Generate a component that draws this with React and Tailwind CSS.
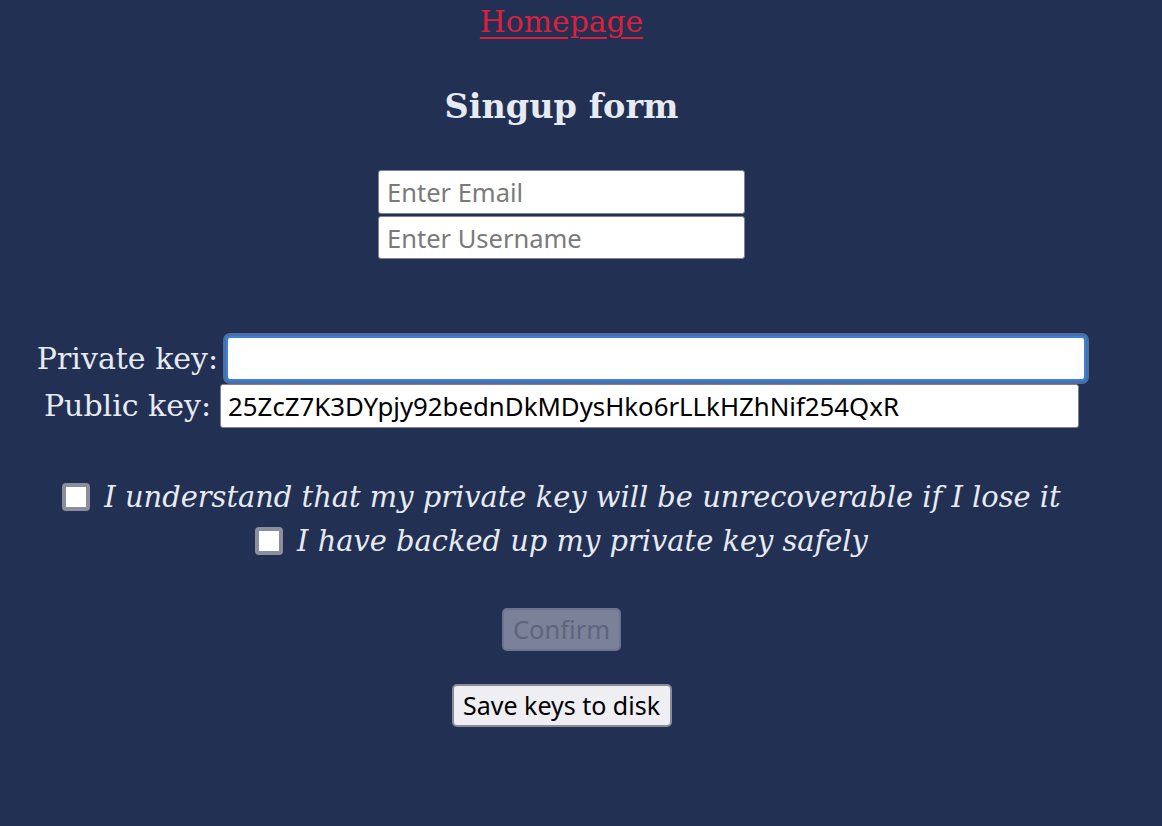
import React from "react";

const serif = "font-['DejaVu_Serif','Liberation_Serif',serif]";
const sans = "font-['Noto_Sans','Open_Sans',sans-serif]";

export default function App() {
  return (
    <div className="min-h-[826px] w-full bg-[#223153] text-[#e7eaf1] flex flex-col items-center pr-[39px]">
      {/* top link */}
      <a
        href="#"
        className={`${serif} text-[29.8px] leading-[44px] text-[#dc1f3d] underline underline-offset-[5px] decoration-[2px]`}
      >
        Homepage
      </a>

      <h1 className={`${serif} mt-[41px] text-[33.5px] leading-[44px] font-bold`}>Singup form</h1>

      {/* account fields */}
      <div className={`${sans} mt-[41px] flex flex-col gap-[2px]`}>
        <input
          type="email"
          placeholder="Enter Email"
          className="w-[367px] h-[44px] bg-white border border-[#80828f] rounded-[3px] px-[8px] text-[25.5px] text-black placeholder:text-[#7a7a7a] outline-none"
        />
        <input
          type="text"
          placeholder="Enter Username"
          className="w-[367px] h-[43px] bg-white border border-[#80828f] rounded-[3px] px-[8px] text-[25.5px] text-black placeholder:text-[#7a7a7a] outline-none"
        />
      </div>

      {/* keys */}
      <div className="mt-[77px] flex flex-col items-center gap-[3px]">
        <div className="flex items-center gap-[8px]">
          <label className={`${serif} text-[30px] leading-[44px]`}>Private key:</label>
          <input
            type="text"
            className={`${sans} w-[860px] h-[45px] bg-white border-2 border-[#3e7fdc] rounded-[4px] ring-[3px] ring-[#4a70a6] outline-none px-[6px] text-[25.5px] text-black`}
          />
        </div>
        <div className="flex items-center gap-[9px]">
          <label className={`${serif} text-[30px] leading-[44px]`}>Public key:</label>
          <input
            type="text"
            readOnly
            value="25ZcZ7K3DYpjy92bednDkMDysHko6rLLkHZhNif254QxR"
            className={`${sans} w-[859px] h-[44px] bg-white border border-[#80828f] rounded-[3px] outline-none px-[7px] text-[25.8px] text-black`}
          />
        </div>
      </div>

      {/* confirmations */}
      <div className={`${serif} mt-[47px] flex flex-col items-center italic text-[28.9px] leading-[44px]`}>
        <label className="flex items-center gap-[14px]">
          <span className="w-[28px] h-[28px] bg-white border-[4px] border-[#8b8e9c] rounded-[4px] shrink-0" />
          I understand that my private key will be unrecoverable if I lose it
        </label>
        <label className="flex items-center gap-[14px]">
          <span className="w-[28px] h-[28px] bg-white border-[4px] border-[#8b8e9c] rounded-[4px] shrink-0" />
          I have backed up my private key safely
        </label>
      </div>

      <button
        disabled
        className={`${sans} mt-[45px] w-[119px] h-[43px] bg-[#7b8199] border-2 border-[#6c7390] rounded-[5px] text-[25.5px] leading-none text-[#5f6579]`}
      >
        Confirm
      </button>

      <button
        className={`${sans} mt-[33px] w-[220px] h-[43px] bg-[#eeeef3] border-2 border-[#8a8c97] rounded-[5px] text-[25px] leading-none text-black`}
      >
        Save keys to disk
      </button>
    </div>
  );
}
